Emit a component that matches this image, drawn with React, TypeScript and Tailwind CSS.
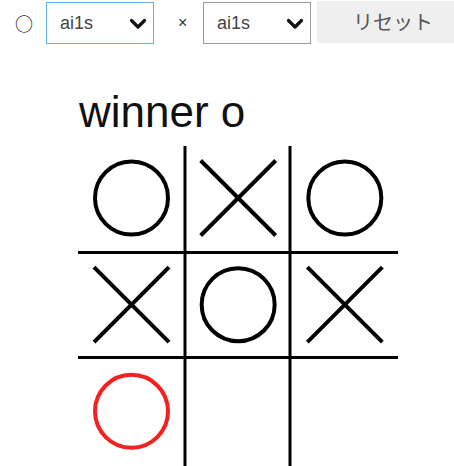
import React from 'react';

type Mark = 'o' | 'x' | 'O' | '';

const board: Mark[] = ['o', 'x', 'o', 'x', 'o', 'x', 'O', '', ''];

const Chevron = () => (
  <svg width="18" height="12" viewBox="0 0 18 12" className="pointer-events-none absolute right-[7px] top-[16px]">
    <path d="M2.5 2.5 L9 9 L15.5 2.5" fill="none" stroke="#111" strokeWidth="3.2" strokeLinecap="round" strokeLinejoin="round" />
  </svg>
);

const AiSelect = ({ focused }: { focused?: boolean }) => (
  <div className="relative mt-[1px] h-[42px] w-[108px] shrink-0">
    <select
      defaultValue="ai1s"
      className={`h-full w-full appearance-none bg-white pl-[13px] text-[18px] text-[#444] outline-none border ${
        focused ? 'border-[#66aef0]' : 'border-[#999]'
      }`}
      style={{ fontFamily: '"Liberation Sans", Arial, sans-serif' }}
    >
      <option value="human">human</option>
      <option value="ai1s">ai1s</option>
    </select>
    <Chevron />
  </div>
);

const Board = () => {
  const cell = 320 / 3;
  return (
    <svg width="320" height="320" viewBox="0 0 320 320" className="block">
      {[107, 212].map((p) => (
        <g key={p}>
          <line x1={p} y1={0} x2={p} y2={320} stroke="#000" strokeWidth="3" />
          <line x1={0} y1={p - 0.5} x2={320} y2={p - 0.5} stroke="#000" strokeWidth="3" />
        </g>
      ))}
      {board.map((m, i) => {
        const cx = (i % 3) * cell + 53.5;
        const cy = Math.floor(i / 3) * cell + 52;
        if (m === 'o' || m === 'O') {
          return (
            <circle key={i} cx={cx} cy={cy} r={36.5} fill="none" stroke={m === 'O' ? '#f42121' : '#000'} strokeWidth="4" />
          );
        }
        if (m === 'x') {
          const d = 37.5;
          return (
            <g key={i} stroke="#000" strokeWidth="4">
              <line x1={cx - d} y1={cy - d} x2={cx + d} y2={cy + d} />
              <line x1={cx + d} y1={cy - d} x2={cx - d} y2={cy + d} />
            </g>
          );
        }
        return null;
      })}
    </svg>
  );
};

export default function App() {
  return (
    <div className="h-[466px] w-[454px] overflow-hidden bg-white" style={{ fontFamily: '"Liberation Sans", Arial, sans-serif' }}>
      <div className="flex h-[44px] items-start pt-[1px]">
        <span
          className="ml-[15px] mt-[10px] w-[31px] shrink-0 text-[18px] leading-[24px] text-[#222]"
          style={{ fontFamily: '"Noto Sans CJK JP", sans-serif' }}
        >
          ○
        </span>
        <AiSelect focused />
        <span className="mt-[10px] w-[49px] shrink-0 pl-[24px] text-[16px] leading-[24px] text-[#333]">×</span>
        <AiSelect />
        <button
          className="ml-[6px] h-[42px] w-[152px] shrink-0 bg-[#efefef] text-[20px] text-[#555]"
          style={{ fontFamily: '"Noto Sans CJK JP", sans-serif' }}
        >
          リセット
        </button>
      </div>
      <h1 className="ml-[79px] mt-[48px] text-[44px] leading-[40px] text-[#111]">winner o</h1>
      <div className="ml-[78px] mt-[14px]">
        <Board />
      </div>
    </div>
  );
}
